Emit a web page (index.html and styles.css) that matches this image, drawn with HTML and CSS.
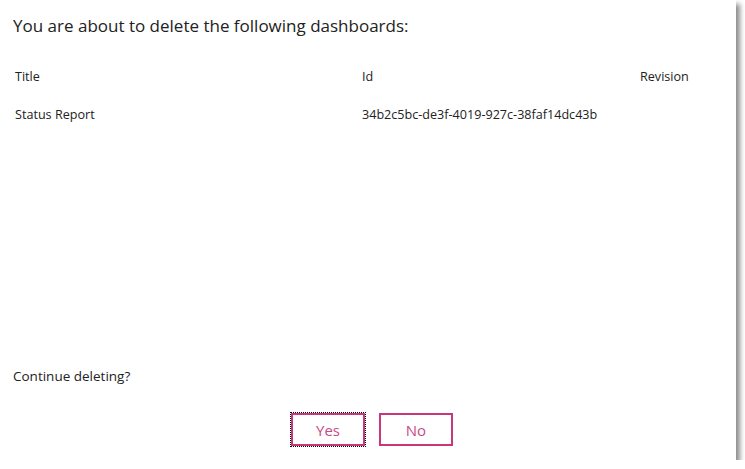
FILE: index.html
```html
<!DOCTYPE html>
<html>
  <head>
    <title>Delete dashboards</title>
    <meta name="viewport" content="width=device-width, initial-scale=1.0" />
    <link rel="stylesheet" href="styles.css">
  </head>
  <body>
    <div class="dialog">
      <h1 class="dialog-title">You are about to delete the following dashboards:</h1>
      <div class="list">
        <div class="row head">
          <span>Title</span>
          <span>Id</span>
          <span>Revision</span>
        </div>
        <div class="row">
          <span>Status Report</span>
          <span>34b2c5bc-de3f-4019-927c-38faf14dc43b</span>
          <span></span>
        </div>
      </div>
      <p class="question">Continue deleting?</p>
      <div class="actions">
        <button class="btn focused">Yes</button>
        <button class="btn">No</button>
      </div>
    </div>
  </body>
</html>
```

FILE: styles.css
```css
body {
  margin: 0;
  background: white;
  font-family: "Open Sans", "Noto Sans", sans-serif;
  color: #222;
}
.dialog {
  width: 736px;
  height: 460px;
  background: white;
  box-shadow: 4px 4px 5px rgba(0, 0, 0, 0.45);
  display: flex;
  flex-direction: column;
  box-sizing: border-box;
}
.dialog-title {
  font-size: 17px;
  font-weight: normal;
  margin: 0;
  padding: 14px 0 0 13px;
  line-height: 24px;
}
.list {
  padding: 31px 0 0 15px;
}
.row {
  display: grid;
  grid-template-columns: 347px 278px 1fr;
  font-size: 12.6px;
  height: 38px;
  line-height: 16px;
}
.question {
  margin: auto 0 0 0;
  padding-left: 13px;
  font-size: 13.5px;
  line-height: 18px;
}
.actions {
  display: flex;
  justify-content: center;
  gap: 14px;
  padding: 28px 0 14px 8px;
}
.btn {
  width: 74px;
  height: 33px;
  background: white;
  border: 2px solid #c8367d;
  color: #c94a88;
  font-family: inherit;
  font-size: 15px;
  padding: 0;
}
.focused {
  outline: 1px dotted black;
  outline-offset: 0;
}
```
